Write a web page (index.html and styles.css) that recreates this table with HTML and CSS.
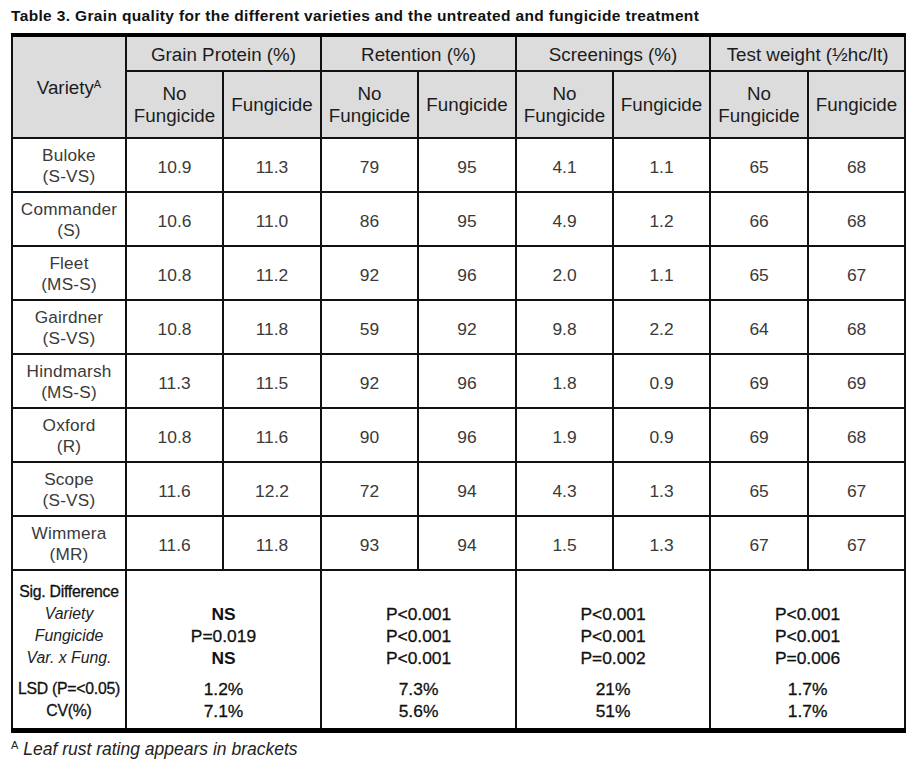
FILE: index.html
```html
<!DOCTYPE html>
<html>
<head>
<meta charset="utf-8">
<link rel="stylesheet" href="styles.css">
</head>
<body>
<div class="page">
  <h1 class="title">Table 3. Grain quality for the different varieties and the untreated and fungicide treatment</h1>
  <table class="grain">
    <colgroup>
      <col class="c-var">
      <col class="c97"><col class="c98"><col class="c97"><col class="c98">
      <col class="c97"><col class="c97"><col class="c98"><col class="c97">
    </colgroup>
    <thead>
      <tr class="h1">
        <th rowspan="2" class="var-head">Variety<sup>A</sup></th>
        <th colspan="2">Grain Protein (%)</th>
        <th colspan="2">Retention (%)</th>
        <th colspan="2">Screenings (%)</th>
        <th colspan="2">Test weight (½hc/lt)</th>
      </tr>
      <tr class="h2">
        <th>No<br>Fungicide</th><th>Fungicide</th>
        <th>No<br>Fungicide</th><th>Fungicide</th>
        <th>No<br>Fungicide</th><th>Fungicide</th>
        <th>No<br>Fungicide</th><th>Fungicide</th>
      </tr>
    </thead>
    <tbody>
      <tr><td class="name">Buloke<br>(S-VS)</td><td>10.9</td><td>11.3</td><td>79</td><td>95</td><td>4.1</td><td>1.1</td><td>65</td><td>68</td></tr>
      <tr><td class="name">Commander<br>(S)</td><td>10.6</td><td>11.0</td><td>86</td><td>95</td><td>4.9</td><td>1.2</td><td>66</td><td>68</td></tr>
      <tr><td class="name">Fleet<br>(MS-S)</td><td>10.8</td><td>11.2</td><td>92</td><td>96</td><td>2.0</td><td>1.1</td><td>65</td><td>67</td></tr>
      <tr><td class="name">Gairdner<br>(S-VS)</td><td>10.8</td><td>11.8</td><td>59</td><td>92</td><td>9.8</td><td>2.2</td><td>64</td><td>68</td></tr>
      <tr><td class="name">Hindmarsh<br>(MS-S)</td><td>11.3</td><td>11.5</td><td>92</td><td>96</td><td>1.8</td><td>0.9</td><td>69</td><td>69</td></tr>
      <tr><td class="name">Oxford<br>(R)</td><td>10.8</td><td>11.6</td><td>90</td><td>96</td><td>1.9</td><td>0.9</td><td>69</td><td>68</td></tr>
      <tr><td class="name">Scope<br>(S-VS)</td><td>11.6</td><td>12.2</td><td>72</td><td>94</td><td>4.3</td><td>1.3</td><td>65</td><td>67</td></tr>
      <tr><td class="name">Wimmera<br>(MR)</td><td>11.6</td><td>11.8</td><td>93</td><td>94</td><td>1.5</td><td>1.3</td><td>67</td><td>67</td></tr>
      <tr class="stats">
        <td class="stat-label">
          <div class="block">
            <div class="sl strong">Sig. Difference</div>
            <div class="sl it">Variety</div>
            <div class="sl it">Fungicide</div>
            <div class="sl it">Var. x Fung.</div>
          </div>
          <div class="block">
            <div class="sl strong">LSD (P=&lt;0.05)</div>
            <div class="sl strong">CV(%)</div>
          </div>
        </td>
        <td colspan="2" class="stat-val">
          <div class="block"><div class="sl">&nbsp;</div><div class="sl b">NS</div><div class="sl">P=0.019</div><div class="sl b">NS</div></div>
          <div class="block"><div class="sl">1.2%</div><div class="sl">7.1%</div></div>
        </td>
        <td colspan="2" class="stat-val">
          <div class="block"><div class="sl">&nbsp;</div><div class="sl">P&lt;0.001</div><div class="sl">P&lt;0.001</div><div class="sl">P&lt;0.001</div></div>
          <div class="block"><div class="sl">7.3%</div><div class="sl">5.6%</div></div>
        </td>
        <td colspan="2" class="stat-val">
          <div class="block"><div class="sl">&nbsp;</div><div class="sl">P&lt;0.001</div><div class="sl">P&lt;0.001</div><div class="sl">P=0.002</div></div>
          <div class="block"><div class="sl">21%</div><div class="sl">51%</div></div>
        </td>
        <td colspan="2" class="stat-val">
          <div class="block"><div class="sl">&nbsp;</div><div class="sl">P&lt;0.001</div><div class="sl">P&lt;0.001</div><div class="sl">P=0.006</div></div>
          <div class="block"><div class="sl">1.7%</div><div class="sl">1.7%</div></div>
        </td>
      </tr>
    </tbody>
  </table>
  <p class="footnote"><sup>A</sup> <em>Leaf rust rating appears in brackets</em></p>
</div>
</body>
</html>
```

FILE: styles.css
```css
html, body {
  margin: 0;
  padding: 0;
  background: #ffffff;
}

body {
  font-family: "Liberation Sans", Arial, sans-serif;
  color: #222;
}

.page {
  padding: 6px 0 0 11px;
}

.title {
  margin: 0 0 7px 0;
  font-size: 15.5px;
  letter-spacing: 0.35px;
  line-height: 20px;
  font-weight: bold;
  color: #111;
  white-space: nowrap;
}

.grain {
  border-collapse: collapse;
  table-layout: fixed;
  width: 893px;
  border-top: 4px solid #000;
  border-bottom: 5px solid #000;
}

.c-var { width: 114px; }
.c97 { width: 97px; }
.c98 { width: 98px; }

.grain th,
.grain td {
  border: 2px solid #111;
  padding: 0;
  text-align: center;
  vertical-align: middle;
}

.grain thead th {
  background: #dcdcdc;
  font-weight: normal;
  font-size: 18.8px;
  line-height: 22px;
  color: #1c1c1c;
}

.grain .h1 { height: 36px; }
.grain .h1 th { padding-top: 2px; }
.grain .h2 { height: 67px; }

.var-head sup {
  font-size: 11px;
  vertical-align: 6px;
  line-height: 0;
}

.grain tbody tr { height: 54px; }

.grain tbody td {
  font-size: 17.4px;
  color: #3a3a3a;
  line-height: 22px;
  padding-top: 4px;
}

.grain tbody td.name {
  font-size: 17.2px;
  line-height: 21px;
  letter-spacing: 0.2px;
  padding-top: 2px;
}

.grain tbody tr.stats { height: 157px; }

.grain tr.stats td {
  vertical-align: top;
  padding: 10px 0 6px 0;
  color: #111;
}

.block + .block {
  margin-top: 9px;
}

.sl {
  line-height: 22px;
  height: 22px;
  white-space: nowrap;
}

.stat-label .sl {
  font-size: 15.8px;
  letter-spacing: -0.25px;
}

.stat-label .strong {
  -webkit-text-stroke: 0.3px #111;
}

.stat-label .it {
  font-style: italic;
  letter-spacing: 0;
  color: #222;
}

.stat-val .sl {
  font-size: 17.4px;
  -webkit-text-stroke: 0.3px #111;
}

.stat-val .sl.b {
  font-weight: bold;
  -webkit-text-stroke: 0;
}

.footnote {
  margin: 6px 0 0 0;
  font-size: 17.5px;
  line-height: 20px;
  color: #222;
}

.footnote sup {
  font-size: 11px;
  vertical-align: 6px;
  line-height: 0;
}

.footnote em {
  font-style: italic;
}
```
